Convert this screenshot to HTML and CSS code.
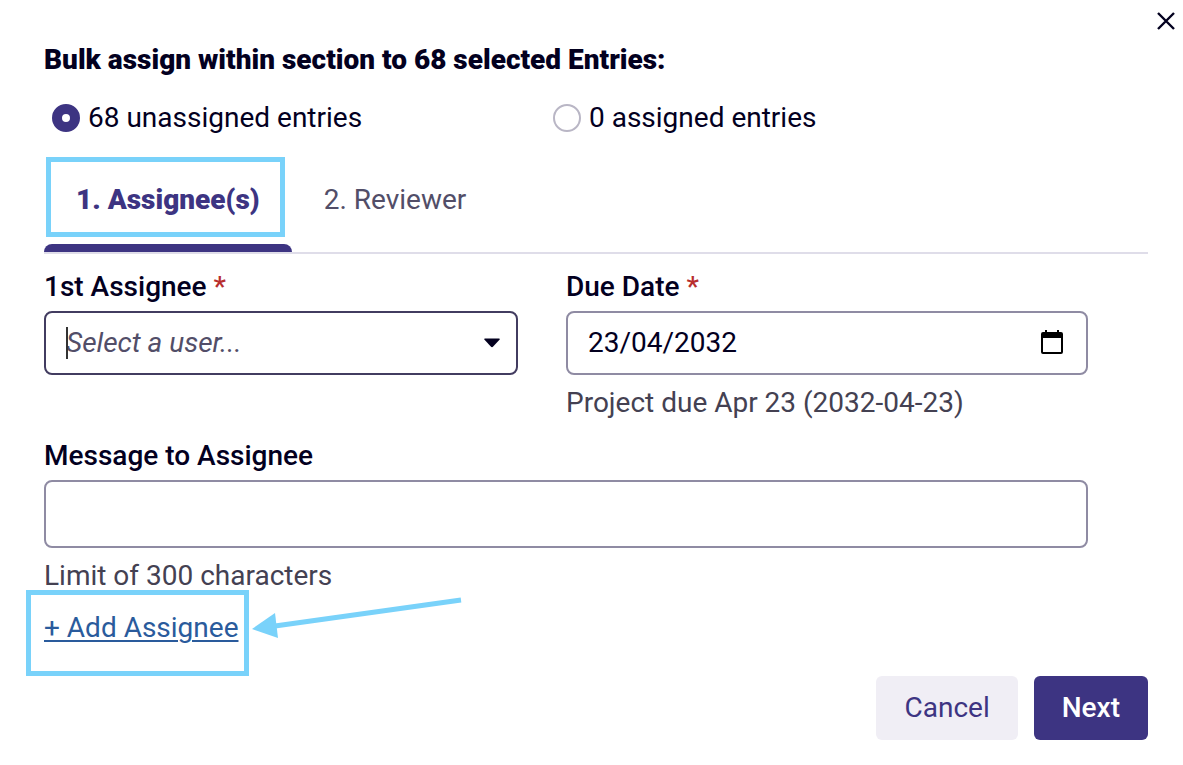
FILE: index.html
```
<!DOCTYPE html>
<html lang="en">
<head>
<meta charset="UTF-8">
<meta name="viewport" content="width=device-width, initial-scale=1.0">
<title>Bulk assign</title>
<link rel="stylesheet" href="styles.css">
</head>
<body>

<main class="dialog" role="dialog" aria-labelledby="dialog-title">
  <button class="close" type="button" aria-label="Close">
    <svg width="18" height="18" viewBox="0 0 18 18"><path d="M1 1L17 17M17 1L1 17" fill="none" stroke="currentColor" stroke-width="2.4"/></svg>
  </button>

  <h1 class="title" id="dialog-title">Bulk assign within section to 68 selected Entries:</h1>

  <form>
    <div class="radios">
      <label class="radio"><input type="radio" name="entries" checked>68 unassigned entries</label>
      <label class="radio"><input type="radio" name="entries">0 assigned entries</label>
    </div>

    <div class="tabs" role="tablist">
      <button class="tab active" type="button" role="tab" aria-selected="true">1. Assignee(s)</button>
      <button class="tab" type="button" role="tab" aria-selected="false">2. Reviewer</button>
      <span class="highlight tab-highlight"></span>
    </div>

    <div class="fields">
      <div class="field">
        <label for="assignee">1st Assignee <span class="required">*</span></label>
        <div class="control select-control">
          <select id="assignee">
            <option>Select a user...</option>
          </select>
          <svg class="arrow" width="16" height="10" viewBox="0 0 16 10"><path d="M1 .5H15Q16.3 .7 15.5 1.8L9.2 8.6Q8 9.8 6.8 8.6L.5 1.8Q-.3 .7 1 .5Z" fill="currentColor"/></svg>
        </div>
      </div>

      <div class="field">
        <label for="due">Due Date <span class="required">*</span></label>
        <div class="control">
          <input id="due" type="text" value="23/04/2032">
          <button class="calendar" type="button" aria-label="Open calendar">
            <svg width="24" height="26" viewBox="0 0 24 26">
              <path d="M3 2H21Q23 2 23 4V22Q23 24 21 24H3Q1 24 1 22V4Q1 2 3 2ZM3 8V22H21V8Z" fill="currentColor" fill-rule="evenodd"/>
              <path d="M6 0V3M18 0V3" stroke="currentColor" stroke-width="2"/>
            </svg>
          </button>
        </div>
        <p class="hint">Project due Apr 23 (2032-04-23)</p>
      </div>

      <div class="field wide">
        <label for="message">Message to Assignee</label>
        <input class="control message" id="message" type="text" maxlength="300">
        <p class="hint">Limit of 300 characters</p>
      </div>
    </div>

    <div class="add">
      <a href="#">+ Add Assignee</a>
      <span class="highlight add-highlight"></span>
      <svg class="pointer" width="212" height="44" viewBox="0 0 212 44">
        <path d="M24 30L210 4" stroke="currentColor" stroke-width="5"/>
        <path d="M1 33L24 17L27 42Z" fill="currentColor"/>
      </svg>
    </div>

    <div class="actions">
      <button class="btn cancel" type="button">Cancel</button>
      <button class="btn next" type="submit">Next</button>
    </div>
  </form>
</main>

</body>
</html>
```

FILE: styles.css
```
:root {
  --text: #03001f;
  --muted: #524e68;
  --hint: #444152;
  --primary: #3d3482;
  --border: #8f8ba3;
  --mark: #79d2fa;
}

* {
  box-sizing: border-box;
}

body {
  margin: 0;
  background: #fff;
  color: var(--text);
  font-family: Roboto, sans-serif;
  font-size: 28px;
  line-height: 41px;
}

button,
input,
select {
  font: inherit;
  color: inherit;
}

button {
  border: none;
  background: none;
  padding: 0;
  cursor: pointer;
}

svg {
  display: block;
}

.dialog {
  position: relative;
  padding: 39px 35px 25px 44px;
}

.close {
  position: absolute;
  top: 12px;
  right: 8px;
}

.title {
  margin: 0 0 17px;
  font-size: 28px;
  font-weight: 900;
}

/* Radios */
.radios {
  display: grid;
  grid-template-columns: 1fr 1fr;
  padding: 0 94px 0 8px;
  margin-bottom: 15px;
}

.radio {
  display: flex;
  align-items: center;
  gap: 8px;
}

.radio input {
  appearance: none;
  width: 28px;
  height: 28px;
  margin: 0;
  border: 2px solid #b9b6c5;
  border-radius: 50%;
}

.radio input:checked {
  border: 10px solid var(--primary);
}

/* Tabs */
.tabs {
  position: relative;
  display: flex;
  border-bottom: 2px solid #dfdde9;
  margin-bottom: 12px;
}

.tab {
  position: relative;
  padding: 26px 32px 32px;
  color: var(--muted);
}

.tab.active {
  color: var(--primary);
  font-weight: 900;
}

.tab.active::after {
  content: "";
  position: absolute;
  left: 0;
  right: 0;
  bottom: 0;
  height: 8px;
  border-radius: 8px 8px 0 0;
  background: var(--primary);
}

.highlight {
  position: absolute;
  border: 5px solid var(--mark);
  pointer-events: none;
}

.tab-highlight {
  top: 4px;
  left: 2px;
  width: 239px;
  height: 80px;
}

/* Fields */
.fields {
  display: grid;
  grid-template-columns: 474fr 522fr;
  column-gap: 48px;
  row-gap: 12px;
  margin-right: 60px;
}

.field label {
  display: block;
  margin-bottom: 4px;
  font-weight: 500;
}

.wide {
  grid-column: 1 / -1;
}

.required {
  color: #b82e2e;
}

.control {
  position: relative;
  display: flex;
  align-items: center;
  width: 100%;
  height: 64px;
  border: 2px solid var(--border);
  border-radius: 8px;
  background: #fff;
}

.control select,
.control input {
  flex: 1;
  min-width: 0;
  height: 100%;
  padding: 0 20px 2px;
  border: none;
  outline: none;
  background: none;
}

.select-control {
  border-color: #423c60;
}

.select-control select {
  appearance: none;
  color: var(--muted);
  font-style: italic;
}

/* text cursor */
.select-control::before {
  content: "";
  position: absolute;
  left: 20px;
  width: 2px;
  height: 32px;
  background: #333;
}

.arrow {
  position: absolute;
  right: 16px;
  pointer-events: none;
}

.calendar {
  margin-right: 22px;
  color: #000;
}

.message {
  height: 68px;
  padding: 0 20px;
}

.hint {
  margin: 7px 0 0;
  color: var(--hint);
}

/* Add assignee */
.add {
  position: relative;
  margin: 11px 0 28px;
}

.add a {
  color: #2a5b9c;
  text-decoration-thickness: 2px;
  text-underline-offset: 3px;
}

.add-highlight {
  top: -17px;
  left: -18px;
  width: 223px;
  height: 86px;
}

.pointer {
  position: absolute;
  top: -11px;
  left: 207px;
  color: var(--mark);
}

/* Buttons */
.actions {
  display: flex;
  justify-content: flex-end;
  gap: 16px;
}

.btn {
  height: 64px;
  padding: 0 28px 2px;
  border-radius: 6px;
}

.cancel {
  background: #f0eef5;
  color: var(--primary);
}

.next {
  background: var(--primary);
  color: #fff;
  font-weight: 500;
}
```
